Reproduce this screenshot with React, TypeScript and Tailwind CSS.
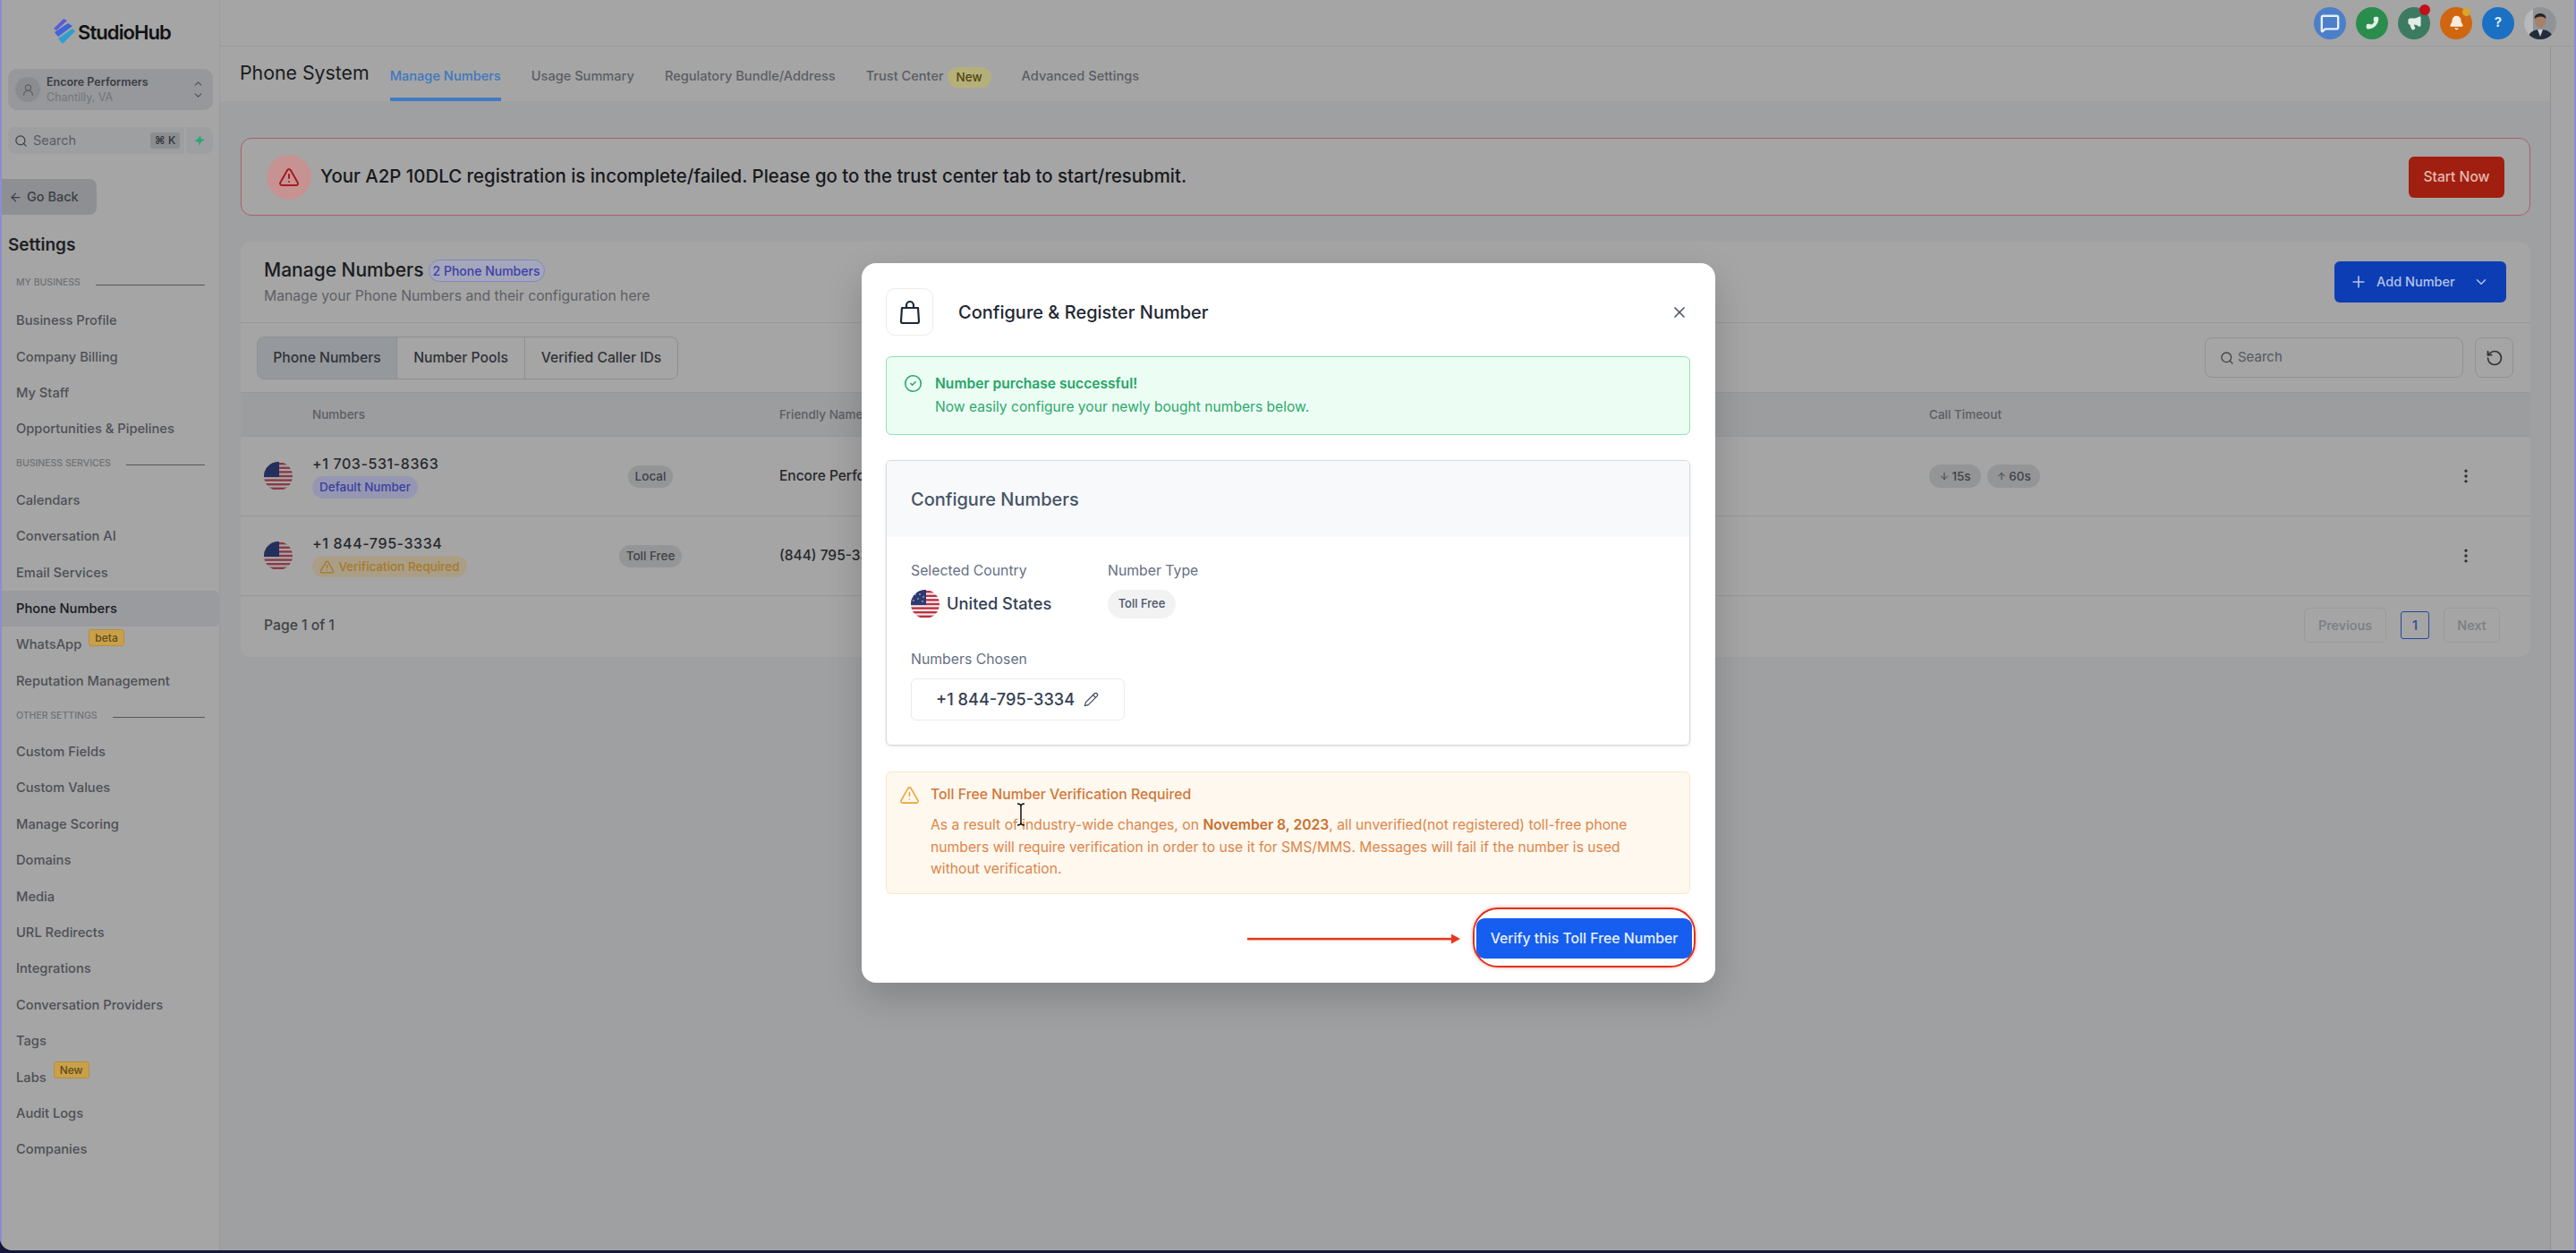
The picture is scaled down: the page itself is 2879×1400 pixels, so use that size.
import React from "react";
import {
  ArrowDown, ArrowLeft, ArrowUp, Bell, ChevronDown, ChevronUp, CircleCheck, EllipsisVertical,
  Megaphone, MessageSquare, Pencil, Phone, Plus, RotateCcw, Search, TriangleAlert, X, UserRound,
} from "lucide-react";

function Flag({ id }: { id: string }) {
  const stripes = [0, 1, 2, 3, 4, 5, 6];
  return (
    <svg width="32" height="32" viewBox="0 0 32 32" className="shrink-0">
      <defs>
        <clipPath id={id}><circle cx="16" cy="16" r="16" /></clipPath>
      </defs>
      <g clipPath={`url(#${id})`}>
        <rect width="32" height="32" fill="#eef0f2" />
        {stripes.map((s) => (
          <rect key={s} x="0" y={1 + s * 4.6} width="32" height="2.4" fill="#c0303f" />
        ))}
        <rect width="17" height="17" fill="#2b3a70" />
        <circle cx="5" cy="5" r="0.8" fill="#dfe3ee" />
        <circle cx="10" cy="5" r="0.8" fill="#dfe3ee" />
        <circle cx="14" cy="8" r="0.8" fill="#dfe3ee" />
        <circle cx="8" cy="10" r="0.8" fill="#dfe3ee" />
        <circle cx="3" cy="12" r="0.8" fill="#dfe3ee" />
        <circle cx="13" cy="13" r="0.8" fill="#dfe3ee" />
      </g>
    </svg>
  );
}

function DimFlag({ id }: { id: string }) {
  return (
    <svg width="32" height="32" viewBox="0 0 32 32" className="shrink-0">
      <defs>
        <clipPath id={id}><circle cx="16" cy="16" r="16" /></clipPath>
      </defs>
      <g clipPath={`url(#${id})`}>
        <rect width="32" height="32" fill="#a6a8ac" />
        {[0, 1, 2, 3, 4, 5, 6].map((s) => (
          <rect key={s} x="0" y={1 + s * 4.6} width="32" height="2.4" fill="#8a3a42" />
        ))}
        <rect width="17" height="17" fill="#23305c" />
      </g>
    </svg>
  );
}

function Logo() {
  return (
    <svg width="24" height="30" viewBox="0 0 24 30" className="shrink-0">
      <path d="M11 0 L15 2 L3 13 L0 11 Z" fill="#5b5bd6" />
      <path d="M16 5 L21 8 L5 20 L1 15 Z" fill="#3f63d8" />
      <path d="M21 11 L24 14 L10 28 L5 22 Z" fill="#2f9fd0" />
    </svg>
  );
}

function Avatar() {
  return (
    <svg width="36" height="36" viewBox="0 0 36 36">
      <defs>
        <clipPath id="avatar-clip"><circle cx="18" cy="18" r="18" /></clipPath>
      </defs>
      <g clipPath="url(#avatar-clip)">
        <rect width="36" height="36" fill="#8f9499" />
        <rect x="0" y="0" width="10" height="36" fill="#b7b9bb" />
        <path d="M4 36 C5 27 12 25 18 25 C25 25 31 27 33 36 Z" fill="#232c3a" />
        <path d="M15 25 L18 33 L21 25 Z" fill="#c9ced4" />
        <ellipse cx="18" cy="15" rx="6" ry="8" fill="#a87f68" />
        <path d="M11.5 13 C11 5 25 5 24.5 13 C22 9.5 15 9.5 11.5 13 Z" fill="#2a2320" />
      </g>
    </svg>
  );
}

function Nav({ label, active, badge }: { label: string; active?: boolean; badge?: string }) {
  return (
    <div className={`relative flex h-[40.4px] items-center pl-[16px] text-[14.7px] font-medium ${active ? "rounded-r-md bg-[#999b9e] text-[#16181c]" : "text-[#4d5056]"}`}>
      <span>{label}</span>
      {badge && (
        <span className="ml-[8px] -mt-[16px] rounded-[3px] border border-[#b58f3a] bg-[#c9a04a] px-[6px] text-[12px] leading-[17px] font-medium text-[#5f4b18]">
          {badge}
        </span>
      )}
    </div>
  );
}

function Section({ label, className }: { label: string; className: string }) {
  return (
    <div className={`flex h-[16px] items-center pl-[16px] pr-[16px] ${className}`}>
      <span className="text-[10.5px] font-medium uppercase text-[#6e7175]">{label}</span>
      <span className="ml-[17px] mt-[4px] h-[1px] flex-1 bg-[#54575b]" />
    </div>
  );
}

function Pill({ children, className }: { children: React.ReactNode; className: string }) {
  return <span className={`inline-flex items-center justify-center rounded-full font-medium ${className}`}>{children}</span>;
}

function TopIcon({ className, children, dot }: { className: string; children: React.ReactNode; dot?: string }) {
  return (
    <div className={`relative flex h-[36px] w-[36px] items-center justify-center rounded-full ${className}`}>
      {children}
      {dot && <span className={`absolute rounded-full ${dot}`} />}
    </div>
  );
}

function Row({ flagId, number, sub, type, name, timeouts }: { flagId: string; number: string; sub: React.ReactNode; type: string; name: string; timeouts?: boolean }) {
  return (
    <div className="flex h-[89px] items-center border-b border-[#95979a]">
      <div className="flex w-[80px] pl-[26px]"><DimFlag id={flagId} /></div>
      <div className="flex w-[290px] flex-col items-start gap-[4px]">
        <span className="text-[16px] leading-[20px] font-medium tracking-[0.6px] text-[#26282c]">{number}</span>
        {sub}
      </div>
      <div className="flex w-[176px] justify-center">
        <Pill className="h-[25px] bg-[#939597] px-[8px] text-[13.5px] text-[#3f4246]">{type}</Pill>
      </div>
      <div className="w-[1341px] pl-[56px] text-[15.5px] whitespace-nowrap font-medium text-[#26282c]">{name}</div>
      <div className="flex w-[560px] gap-[7px]">
        {timeouts && (
          <>
            <Pill className="h-[26px] w-[58px] gap-[2px] bg-[#939597] text-[13.5px] text-[#3f4246]"><ArrowDown size={12} />15s</Pill>
            <Pill className="h-[26px] w-[59px] gap-[2px] bg-[#939597] text-[13.5px] text-[#3f4246]"><ArrowUp size={12} />60s</Pill>
          </>
        )}
      </div>
      <div className="flex w-[80px] justify-center text-[#2c2e32]"><EllipsisVertical size={20} /></div>
    </div>
  );
}

export default function App() {
  const first = ["Business Profile", "Company Billing", "My Staff", "Opportunities & Pipelines"];
  const third = ["Custom Fields", "Custom Values", "Manage Scoring", "Domains", "Media", "URL Redirects", "Integrations", "Conversation Providers", "Tags"];
  return (
    <div className="relative h-[1400px] w-[2879px] overflow-hidden bg-[#14163a] font-['Inter','Noto_Sans',sans-serif]">
      <div className="flex h-[1397px] overflow-hidden rounded-bl-[14px] bg-[#a5a5a5]">
        <div className="w-[2px] shrink-0 bg-[#8d8dd2]" />
        {/* Sidebar */}
        <aside className="flex h-full w-[244px] shrink-0 flex-col border-r border-[#9b9b9b] bg-[#a5a5a5]">
          <div className="mt-[21px] flex h-[30px] items-center gap-[3px] pl-[58px]">
            <Logo />
            <span className="text-[22px] font-semibold tracking-[-0.9px] text-[#111214]">StudioHub</span>
          </div>
          <div className="mx-[7px] mt-[26px] flex h-[46px] items-center rounded-[10px] bg-[#96989b] pl-[8px] pr-[10px]">
            <div className="flex h-[28px] w-[28px] items-center justify-center rounded-full bg-[#8a8c8f] text-[#5f6266]"><UserRound size={15} /></div>
            <div className="ml-[7px] flex flex-1 flex-col">
              <span className="text-[12.5px] leading-[17px] font-semibold text-[#3a3d42]">Encore Performers</span>
              <span className="text-[12.5px] leading-[17px] text-[#72757a]">Chantilly, VA</span>
            </div>
            <div className="flex flex-col text-[#4d5054]"><ChevronUp size={13} /><ChevronDown size={13} /></div>
          </div>
          <div className="mx-[7px] mt-[19px] flex h-[30px] gap-[2px]">
            <div className="flex flex-1 items-center rounded-l-[8px] bg-[#9d9fa1] pl-[7px] pr-[5px]">
              <Search size={15} className="text-[#3f4246]" />
              <span className="ml-[6px] flex-1 text-[14.5px] text-[#5a5d62]">Search</span>
              <span className="flex h-[18px] w-[33px] items-center justify-center rounded-[3px] bg-[#8b8d90] text-[12px] font-medium text-[#303338]">⌘ K</span>
            </div>
            <div className="flex w-[30px] items-center justify-center rounded-r-[8px] bg-[#9d9fa1]">
              <svg width="14" height="14" viewBox="0 0 16 16" fill="#2fa578">
                <path d="M9 1 L10 6 L15 6.5 L10 10 L7 15 L7 10 L1.5 8.5 L6.5 5.5 Z" />
              </svg>
            </div>
          </div>
          <div className="mt-[28px] flex h-[40px] w-[106px] items-center gap-[5px] rounded-r-[8px] bg-[#8d8f93] pl-[8px] text-[14.5px] font-medium text-[#3c3f44]">
            <ArrowLeft size={15} className="shrink-0" />
            <span>Go Back</span>
          </div>
          <div className="mt-[20px] pl-[7px] text-[19px] leading-[28px] font-semibold text-[#1e2024]">Settings</div>
          <Section label="My Business" className="mt-[20px]" />
          <div className="mt-[14px]">{first.map((l) => <Nav key={l} label={l} />)}</div>
          <Section label="Business Services" className="mt-[10px]" />
          <div className="mt-[13px]">
            <Nav label="Calendars" />
            <Nav label="Conversation AI" />
            <Nav label="Email Services" />
            <Nav label="Phone Numbers" active />
            <Nav label="WhatsApp" badge="beta" />
            <Nav label="Reputation Management" />
          </div>
          <Section label="Other Settings" className="mt-[11px]" />
          <div className="mt-[12px]">
            {third.map((l) => <Nav key={l} label={l} />)}
            <Nav label="Labs" badge="New" />
            <Nav label="Audit Logs" />
            <Nav label="Companies" />
          </div>
        </aside>

        {/* Right column */}
        <div className="flex min-w-0 flex-1 flex-col">
          <div className="flex h-[52px] shrink-0 items-center justify-end gap-[11px] border-b border-[#9a9a9a] pr-[20px]">
            <TopIcon className="bg-[#4b7fc9] text-[#e8eef8]"><MessageSquare size={22} strokeWidth={2.6} /></TopIcon>
            <TopIcon className="bg-[#2a8d4d] text-[#e4f0e8]"><Phone size={15} className="fill-[#e4f0e8] -scale-x-100" /></TopIcon>
            <TopIcon className="bg-[#3d7a62] text-[#e4ece8]" dot="-top-[3px] right-[0px] h-[12px] w-[12px] bg-[#c4101c]"><Megaphone size={17} className="fill-[#e4ece8]" /></TopIcon>
            <TopIcon className="bg-[#d0660f] text-[#f8ece0]" dot="top-[1px] right-[2px] h-[9px] w-[9px] bg-[#d8a52e]"><Bell size={17} className="fill-[#f8ece0]" /></TopIcon>
            <TopIcon className="bg-[#1a70c2] text-[15px] font-bold text-[#e0ecf8]">?</TopIcon>
            <Avatar />
          </div>
          <div className="flex min-h-0 flex-1">
            <div className="flex min-w-0 flex-1 flex-col border-r border-[#8f9194] bg-[#9fa0a2]">
              <div className="flex h-[61px] shrink-0 items-start bg-[#a5a5a5] pl-[22px]">
                <span className="mt-[14px] text-[21.3px] leading-[30px] text-[#1a1c20]">Phone System</span>
                <nav className="ml-[23px] flex h-full gap-[34px] text-[14.6px] font-medium text-[#5b5e63]">
                  <span className="flex h-full items-center border-b-[4px] border-[#3f7bc4] pt-[11px] text-[#3d78c2]">Manage Numbers</span>
                  <span className="flex h-full items-center pt-[7px]">Usage Summary</span>
                  <span className="flex h-full items-center pt-[7px]">Regulatory Bundle/Address</span>
                  <span className="flex h-full items-center gap-[4px] pt-[7px]">
                    Trust Center
                    <Pill className="h-[23px] w-[49px] bg-[#b5b07a] text-[13.5px] text-[#4f4410]">New</Pill>
                  </span>
                  <span className="flex h-full items-center pt-[7px]">Advanced Settings</span>
                </nav>
              </div>
              <div className="flex flex-col pl-[23px] pr-[22px] pt-[41px]">
                <div className="flex h-[87px] items-center rounded-[12px] border-[1.5px] border-[#a8606a] bg-[#a5a5a5] pl-[28px] pr-[28px]">
                  <div className="flex h-[50px] w-[50px] items-center justify-center rounded-full bg-[#c69392]">
                    <TriangleAlert size={24} className="text-[#a61b22]" />
                  </div>
                  <span className="ml-[10px] flex-1 text-[20.4px] font-medium text-[#17191d]">
                    Your A2P 10DLC registration is incomplete/failed. Please go to the trust center tab to start/resubmit.
                  </span>
                  <span className="flex h-[46px] w-[107px] items-center justify-center rounded-[6px] bg-[#a01f10] text-[15.6px] font-medium text-[#e4b9b2]">Start Now</span>
                </div>

                <div className="mt-[29px] h-[464px] rounded-[12px] bg-[#a5a5a5]">
                  <div className="flex h-[91px] items-center justify-between border-b border-[#95979a] pl-[26px] pr-[27px]">
                    <div className="flex flex-col">
                      <div className="flex items-center gap-[5px]">
                        <span className="text-[21px] leading-[30px] font-medium text-[#1a1c20]">Manage Numbers</span>
                        <Pill className="h-[25px] w-[130px] border-[1.5px] border-[#8388bd] bg-[#a4a6bc] text-[14px] text-[#3c3fa6]">2 Phone Numbers</Pill>
                      </div>
                      <span className="mt-[2px] text-[15.7px] leading-[24px] text-[#5d6065]">Manage your Phone Numbers and their configuration here</span>
                    </div>
                    <div className="flex h-[46px] w-[192px] items-center rounded-[6px] bg-[#0c3db4] pl-[17px] text-[14.5px] font-medium text-[#b4c3e6]">
                      <Plus size={20} />
                      <span className="ml-[10px]">Add Number</span>
                      <ChevronDown size={18} className="ml-[20px]" />
                    </div>
                  </div>
                  <div className="flex h-[78px] items-center justify-between border-b border-[#95979a] pl-[18px] pr-[19px]">
                    <div className="flex h-[48px] overflow-hidden rounded-[8px] border-[1.5px] border-[#8c8f93] text-[15.7px] font-medium text-[#2f3238]">
                      <span className="flex w-[156px] items-center justify-center border-r border-[#8c8f93] bg-[#95989c]">Phone Numbers</span>
                      <span className="flex w-[143px] items-center justify-center border-r border-[#8c8f93]">Number Pools</span>
                      <span className="flex w-[170px] items-center justify-center">Verified Caller IDs</span>
                    </div>
                    <div className="flex items-center gap-[13px]">
                      <div className="flex h-[45px] w-[289px] items-center rounded-[8px] border border-[#8f9195] pl-[16px] text-[15px] text-[#55585d]">
                        <Search size={16} className="text-[#3f4246]" />
                        <span className="ml-[4px]">Search</span>
                      </div>
                      <div className="flex h-[45px] w-[43px] items-center justify-center rounded-[8px] border border-[#8f9195] text-[#2f3236]"><RotateCcw size={20} /></div>
                    </div>
                  </div>
                  <div className="flex h-[49px] items-center border-b border-[#95979a] bg-[#9c9d9f] text-[13.5px] font-medium text-[#5b5e63]">
                    <span className="ml-[80px] w-[522px]">Numbers</span>
                    <span className="w-[1285px]">Friendly Name</span>
                    <span>Call Timeout</span>
                  </div>
                  <Row
                    flagId="f1"
                    number="+1 703-531-8363"
                    type="Local"
                    name="Encore Performers"
                    timeouts
                    sub={<Pill className="h-[25px] w-[118px] bg-[#9597b2] text-[13.5px] text-[#3a3ea0]">Default Number</Pill>}
                  />
                  <Row
                    flagId="f2"
                    number="+1 844-795-3334"
                    type="Toll Free"
                    name="(844) 795-3334"
                    sub={
                      <Pill className="h-[24px] w-[173px] gap-[4px] bg-[#aa9e86] text-[13.5px] text-[#a67a2c]">
                        <TriangleAlert size={17} />Verification Required
                      </Pill>
                    }
                  />
                  <div className="flex h-[68px] items-center justify-between pb-[3px] pl-[26px] pr-[34px]">
                    <span className="text-[15.7px] font-medium text-[#3f4246]">Page 1 of 1</span>
                    <div className="flex items-center gap-[16px] text-[14.5px] font-medium text-[#7b7e82]">
                      <span className="flex h-[39px] w-[92px] items-center justify-center rounded-[6px] border border-[#989a9c]">Previous</span>
                      <span className="flex h-[31px] w-[32px] items-center justify-center rounded-[3px] border-[1.5px] border-[#234a9e] text-[#2c4c94]">1</span>
                      <span className="flex h-[39px] w-[63px] items-center justify-center rounded-[6px] border border-[#989a9c]">Next</span>
                    </div>
                  </div>
                </div>
              </div>
            </div>
            <div className="w-[26px] shrink-0 bg-[#a5a5a5]" />
          </div>
        </div>
        <div className="w-[2px] shrink-0 bg-[#8d8dd2]" />
      </div>

      {/* Modal */}
      <div className="absolute left-[963px] top-[294px] flex h-[804px] w-[954px] flex-col rounded-[16px] bg-white pl-[27px] pr-[28px] shadow-[0_16px_40px_rgba(0,0,0,0.18)]">
        <div className="mt-[28px] flex h-[53px] items-center">
          <div className="flex h-[53px] w-[53px] items-center justify-center rounded-[10px] border border-[#eaecf0] text-[#1d2939]">
            <svg width="26" height="28" viewBox="0 0 26 28" fill="none" stroke="currentColor" strokeWidth="2.2" strokeLinejoin="round">
              <path d="M4 9 H22 L23 24 a2 2 0 0 1 -2 2 H5 a2 2 0 0 1 -2 -2 Z" />
              <path d="M9 9 V6 a4 4 0 0 1 8 0 V9" />
            </svg>
          </div>
          <span className="ml-[28px] flex-1 text-[20px] font-medium text-[#1f2733]">Configure &amp; Register Number</span>
          <X size={20} className="mr-[2px] text-[#4a5462]" />
        </div>

        <div className="mt-[23px] flex h-[88px] flex-col justify-center rounded-[6px] border-[1.5px] border-[#8ee3b4] bg-[#ecfdf4] pl-[54px]">
          <div className="relative text-[15.6px] leading-[26px] font-semibold text-[#27a567]">
            <CircleCheck size={21} className="absolute -left-[35px] top-[2px]" strokeWidth={1.8} />
            Number purchase successful!
          </div>
          <div className="text-[15.6px] leading-[26px] text-[#2fa96c]">Now easily configure your newly bought numbers below.</div>
        </div>

        <div className="mt-[28px] h-[319px] overflow-hidden rounded-[6px] border-[1.5px] border-[#d7dadf] shadow-[0_1px_3px_rgba(16,24,40,0.12)]">
          <div className="flex h-[85px] items-center bg-[#f8f9fa] pl-[27px] text-[20px] font-medium text-[#475467]">Configure Numbers</div>
          <div className="pl-[27px] pt-[28px]">
            <div className="flex">
              <div className="flex w-[220px] flex-col">
                <span className="text-[15.8px] leading-[20px] text-[#667085]">Selected Country</span>
                <div className="mt-[11px] flex h-[32px] items-center gap-[8px]">
                  <Flag id="f3" />
                  <span className="text-[18.3px] font-medium text-[#344054]">United States</span>
                </div>
              </div>
              <div className="flex flex-col items-start">
                <span className="text-[15.8px] leading-[20px] text-[#667085]">Number Type</span>
                <Pill className="mt-[11px] h-[32px] w-[76px] bg-[#f2f2f3] text-[13px] text-[#475467]">Toll Free</Pill>
              </div>
            </div>
            <div className="mt-[36px] text-[15.8px] leading-[20px] text-[#667085]">Numbers Chosen</div>
            <div className="mt-[11px] flex h-[47px] w-[239px] items-center gap-[10px] rounded-[6px] border border-[#e8eaee] pl-[27px] text-[18.2px] font-medium whitespace-nowrap text-[#344054]">
              +1 844-795-3334
              <Pencil size={17} strokeWidth={1.6} className="shrink-0" />
            </div>
          </div>
        </div>

        <div className="mt-[29px] h-[137px] rounded-[6px] border border-[#fbe6c8] bg-[#fff8ee] pl-[49px] pr-[30px] pt-[12px] text-[15.7px] text-[#dd854b]">
          <div className="relative text-[15.8px] leading-[26px] font-medium text-[#d0773a]">
            <TriangleAlert size={23} strokeWidth={1.6} className="absolute -left-[35px] top-[2px] text-[#eea333]" />
            Toll Free Number Verification Required
          </div>
          <p className="mt-[9px] leading-[24.6px]">
            As a result of industry-wide changes, on <span className="font-semibold text-[#c9702f]">November 8, 2023</span>, all unverified(not registered) toll-free phone numbers will require verification in order to use it for SMS/MMS. Messages will fail if the number is used without verification.
          </p>
        </div>

        <div className="-mr-[2px] mt-[27px] flex h-[45px] items-center justify-end">
          <svg width="238" height="14" viewBox="0 0 238 14" className="mr-[18px]">
            <rect x="0" y="5.8" width="228" height="2.6" fill="#e5391e" />
            <path d="M228 1.5 L238 7 L228 12.5 Z" fill="#e5391e" />
          </svg>
          <span className="relative flex h-[45px] w-[241px] items-center justify-center rounded-[9px] bg-[#155eef] text-[15.8px] font-medium whitespace-nowrap text-[#e8f0ff]">
            Verify this Toll Free Number
            <span className="absolute -left-[4px] -top-[12px] h-[67px] w-[249px] rounded-[28px] border-[2.5px] border-[#e0301c] shadow-[0_0_4px_rgba(224,48,28,0.4)]" />
          </span>
        </div>
      </div>

      {/* I-beam mouse cursor lying over the modal */}
      <svg width="12" height="26" viewBox="0 0 12 26" className="absolute left-[1135px] top-[897px]" fill="none" stroke="#111" strokeWidth="1.5">
        <path d="M2 1 Q6 1 6 4 V22 Q6 25 10 25 M10 1 Q6 1 6 4 M6 22 Q6 25 2 25" />
      </svg>
    </div>
  );
}
